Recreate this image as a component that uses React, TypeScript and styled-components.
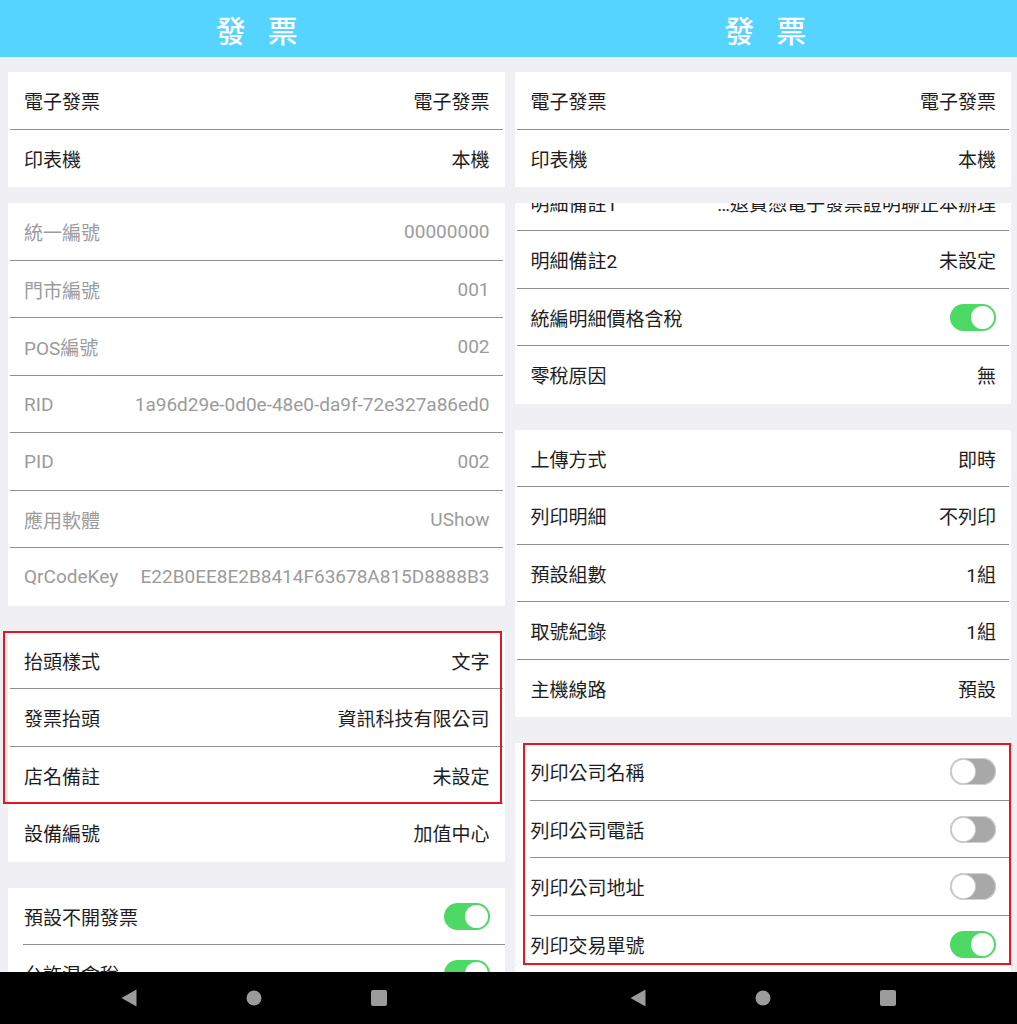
import styled, { createGlobalStyle } from "styled-components";

// ─── Global ───────────────────────────────────────────────────────────────────

const GlobalStyle = createGlobalStyle`
  html, body {
    margin: 0;
    padding: 0;
    background: #000;
  }
  body {
    font-family: Roboto, "Noto Sans CJK TC", "Noto Sans", sans-serif;
    -webkit-font-smoothing: antialiased;
  }
`;

// ─── Styled components ────────────────────────────────────────────────────────

const Screen = styled.div`
  display: grid;
  grid-template-columns: 1fr 1fr;
  width: 1017px;
  height: 1024px;
`;

const Panel = styled.section`
  display: flex;
  flex-direction: column;
  height: 1024px;
  overflow: hidden;
  background: #efeff4;
`;

const TitleBar = styled.header`
  flex: 0 0 57px;
  display: flex;
  align-items: center;
  justify-content: center;
  gap: 22px;
  padding-left: 5px;
  background: #54d4fe;
  color: #fff;
  font-family: "Noto Sans CJK TC", sans-serif;
  font-size: 30px;
  font-weight: 500;
`;

const Body = styled.div`
  flex: 1;
  min-height: 0;
  display: flex;
  flex-direction: column;
  padding-top: 15px;
`;

const Fixed = styled.div<{ $left: number; $right: number }>`
  padding: 0 ${p => p.$right}px 0 ${p => p.$left}px;
`;

const ScrollArea = styled.div<{ $left: number; $right: number }>`
  flex: 1;
  min-height: 0;
  margin-top: 16px;
  padding: 0 ${p => p.$right}px 0 ${p => p.$left}px;
  overflow: hidden;
`;

const ScrollContent = styled.div<{ $offset: number }>`
  display: flex;
  flex-direction: column;
  gap: 26px;
  margin-top: ${p => -p.$offset}px;
`;

const Card = styled.div`
  background: #fff;
  display: flex;
  flex-direction: column;
`;

const Highlight = styled.div<{ $box: [number, number, number, number] }>`
  position: relative;
  display: flex;
  flex-direction: column;

  &::after {
    content: "";
    position: absolute;
    top: ${p => p.$box[0]}px;
    right: ${p => p.$box[1]}px;
    bottom: ${p => p.$box[2]}px;
    left: ${p => p.$box[3]}px;
    border: 2px solid #e6151f;
    pointer-events: none;
    z-index: 2;
  }
`;

const Row = styled.div<{ $inset: number; $last?: boolean }>`
  position: relative;
  flex: 0 0 57.5px;
  height: 57.5px;
  display: flex;
  align-items: center;
  justify-content: space-between;
  padding: 0 15px 0 16px;
  box-sizing: border-box;
  font-size: 19px;

  &::after {
    content: "";
    display: ${p => (p.$last ? "none" : "block")};
    position: absolute;
    left: ${p => p.$inset}px;
    right: ${p => (p.$inset > 2 ? 0 : 2)}px;
    bottom: 0;
    height: 1px;
    background: #8f8f8f;
  }
`;

const Label = styled.span<{ $muted?: boolean }>`
  color: ${p => (p.$muted ? "#9b9b9b" : "#1e1e1e")};
  white-space: nowrap;
`;

const Value = styled.span<{ $muted?: boolean }>`
  color: ${p => (p.$muted ? "#9b9b9b" : "#1e1e1e")};
  white-space: nowrap;
  text-align: right;
`;

const Track = styled.span<{ $on: boolean }>`
  width: 46px;
  height: 27px;
  box-sizing: border-box;
  border-radius: 14px;
  padding: 2px;
  display: flex;
  justify-content: ${p => (p.$on ? "flex-end" : "flex-start")};
  background: ${p => (p.$on ? "#4cd964" : "#a8a8a8")};
  box-shadow: ${p => (p.$on ? "none" : "inset 0 0 0 1px #d2d2d2")};
`;

const Knob = styled.span<{ $on: boolean }>`
  width: 23px;
  height: 23px;
  border-radius: 50%;
  background: #fff;
  box-shadow: ${p => (p.$on ? "none" : "0 0 0 1px #cfcfcf")};
`;

const NavBar = styled.nav`
  flex: 0 0 52px;
  display: flex;
  align-items: center;
  justify-content: center;
  gap: 101px;
  background: #000;
`;

const NavIcon = styled.svg`
  width: 24px;
  height: 24px;
  display: block;
  fill: #9b9b9b;
`;

// ─── Types & data ─────────────────────────────────────────────────────────────

type Item = {
  label: string;
  value?: string;
  toggle?: boolean;
};

type Group = {
  items: Item[];
  muted?: boolean;
  toggles?: boolean;
  // rows [from, to) wrapped in the red outline, with outline offsets
  mark?: { from: number; to: number; box: [number, number, number, number] };
};

const topItems: Item[] = [
  { label: "電子發票", value: "電子發票" },
  { label: "印表機", value: "本機" },
];

const leftGroups: Group[] = [
  {
    muted: true,
    items: [
      { label: "統一編號", value: "00000000" },
      { label: "門市編號", value: "001" },
      { label: "POS編號", value: "002" },
      { label: "RID", value: "1a96d29e-0d0e-48e0-da9f-72e327a86ed0" },
      { label: "PID", value: "002" },
      { label: "應用軟體", value: "UShow" },
      { label: "QrCodeKey", value: "E22B0EE8E2B8414F63678A815D8888B3" },
    ],
  },
  {
    items: [
      { label: "抬頭樣式", value: "文字" },
      { label: "發票抬頭", value: "資訊科技有限公司" },
      { label: "店名備註", value: "未設定" },
      { label: "設備編號", value: "加值中心" },
    ],
    mark: { from: 0, to: 3, box: [-1, 3, 0, -5] },
  },
  {
    toggles: true,
    items: [
      { label: "預設不開發票", toggle: true },
      { label: "允許混含稅", toggle: true },
    ],
  },
];

const rightGroups: Group[] = [
  {
    items: [
      { label: "明細備註1", value: "…退貨憑電子發票證明聯正本辦理" },
      { label: "明細備註2", value: "未設定" },
      { label: "統編明細價格含稅", toggle: true },
      { label: "零稅原因", value: "無" },
    ],
  },
  {
    items: [
      { label: "上傳方式", value: "即時" },
      { label: "列印明細", value: "不列印" },
      { label: "預設組數", value: "1組" },
      { label: "取號紀錄", value: "1組" },
      { label: "主機線路", value: "預設" },
    ],
  },
  {
    toggles: true,
    items: [
      { label: "列印公司名稱", toggle: false },
      { label: "列印公司電話", toggle: false },
      { label: "列印公司地址", toggle: false },
      { label: "列印交易單號", toggle: true },
    ],
    mark: { from: 0, to: 4, box: [0, 0, 8, 8] },
  },
];

// ─── Composants ───────────────────────────────────────────────────────────────

function Switch({ on }: { on: boolean }) {
  return (
    <Track $on={on}>
      <Knob $on={on} />
    </Track>
  );
}

function SettingRow({ item, muted, inset, last }: { item: Item; muted?: boolean; inset: number; last?: boolean }) {
  return (
    <Row $inset={inset} $last={last}>
      <Label $muted={muted}>{item.label}</Label>
      {item.toggle !== undefined ? (
        <Switch on={item.toggle} />
      ) : (
        <Value $muted={muted}>{item.value}</Value>
      )}
    </Row>
  );
}

function SettingCard({ group }: { group: Group }) {
  const inset = group.toggles ? 15 : 2;
  const rows = group.items.map((item, i) => (
    <SettingRow
      key={item.label}
      item={item}
      muted={group.muted}
      inset={inset}
      last={i === group.items.length - 1}
    />
  ));

  if (!group.mark) return <Card>{rows}</Card>;

  const { from, to, box } = group.mark;
  return (
    <Card>
      {rows.slice(0, from)}
      <Highlight $box={box}>{rows.slice(from, to)}</Highlight>
      {rows.slice(to)}
    </Card>
  );
}

function NavButtons() {
  return (
    <NavBar>
      <NavIcon viewBox="0 0 24 24">
        <path d="M4.5 12 L19.5 3.5 L19.5 20.5 Z" />
      </NavIcon>
      <NavIcon viewBox="0 0 24 24">
        <circle cx="12" cy="12" r="7.5" />
      </NavIcon>
      <NavIcon viewBox="0 0 24 24">
        <rect x="4" y="4" width="16" height="16" rx="2" />
      </NavIcon>
    </NavBar>
  );
}

function InvoiceScreen({ groups, offset, pad }: { groups: Group[]; offset: number; pad: [number, number] }) {
  return (
    <Panel>
      <TitleBar>
        <span>發</span>
        <span>票</span>
      </TitleBar>
      <Body>
        <Fixed $left={pad[0]} $right={pad[1]}>
          <SettingCard group={{ items: topItems }} />
        </Fixed>
        <ScrollArea $left={pad[0]} $right={pad[1]}>
          <ScrollContent $offset={offset}>
            {groups.map((g, i) => (
              <SettingCard key={i} group={g} />
            ))}
          </ScrollContent>
        </ScrollArea>
      </Body>
      <NavButtons />
    </Panel>
  );
}

export default function App() {
  return (
    <>
      <GlobalStyle />
      <Screen>
        <InvoiceScreen groups={leftGroups} offset={0} pad={[8, 4]} />
        <InvoiceScreen groups={rightGroups} offset={29.5} pad={[6, 6]} />
      </Screen>
    </>
  );
}
